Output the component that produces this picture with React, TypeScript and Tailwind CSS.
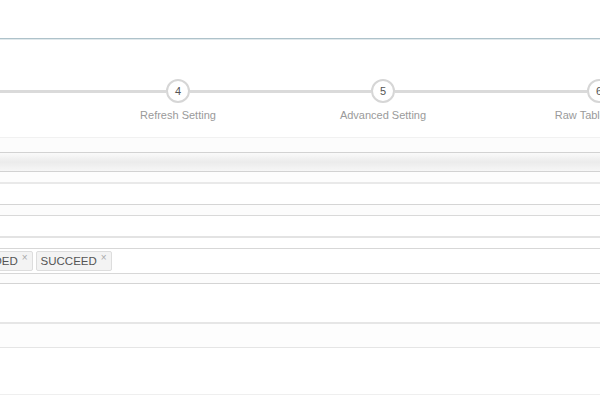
const steps = [
  { n: 3, label: 'Measures', w: 'w-[205px] -ml-[130px]' },
  { n: 4, label: 'Refresh Setting', w: 'w-[206px]' },
  { n: 5, label: 'Advanced Setting', w: 'w-[204px]' },
  { n: 6, label: 'Raw Table Setting', w: 'w-[228px]' },
];

const Step = ({ n, label, w }: { n: number; label: string; w: string }) => (
  <div className={`${w} shrink-0 flex flex-col items-center`}>
    <div className="flex items-center w-full">
      <div className="flex-1 h-[3px] bg-[#dadada]" />
      <div className="w-[24px] h-[24px] rounded-full border-2 border-[#d6d6d6] bg-white flex items-center justify-center text-[11px] text-[#555]">
        {n}
      </div>
      <div className="flex-1 h-[3px] bg-[#dadada]" />
    </div>
    <span className="mt-[6px] text-[11px] leading-[13px] text-[#9a9a9a] whitespace-nowrap">{label}</span>
  </div>
);

const Tag = ({ text, className = '' }: { text: string; className?: string }) => (
  <span
    className={`shrink-0 flex items-start h-[20px] pl-[4px] pr-[4px] bg-[#f3f3f3] border border-[#dddddd] rounded-[2px] text-[11.5px] text-[#555] ${className}`}
  >
    <span className="leading-[18px]">{text}</span>
    <span className="ml-[4px] text-[10px] leading-[10px] text-[#aaa] mt-[1px]">×</span>
  </span>
);

export default function App() {
  return (
    <div className="w-[600px] h-[400px] overflow-hidden bg-white font-['Liberation_Sans',Arial,sans-serif]">
      <div className="h-[39px] border-b border-[#aec2ca]" />
      <div className="h-px bg-[#e1e9ec]" />

      <div className="h-[97px] pt-[39px] flex">
        {steps.map((s) => (
          <Step key={s.n} {...s} />
        ))}
      </div>

      <div className="h-[15px] border-t border-[#f1f1f1] bg-[#fcfcfc]" />
      <div className="h-[20px] border-y border-[#d2d2d2] bg-linear-to-b from-[#fafafa] via-[#ebebeb] to-[#f6f6f6]" />

      <div className="h-[10px] bg-[#fdfdfd]" />
      <div className="h-[23px] border-t-2 border-t-[#e9e9e9] border-b border-b-[#d5d5d5]" />

      <div className="h-[10px] bg-[#fcfcfc]" />
      <div className="h-[23px] border-t border-t-[#d9d9d9] border-b-2 border-b-[#e3e3e3]" />

      <div className="h-[10px]" />
      <div className="h-[26px] border-y border-[#d7d7d7] flex items-center gap-[3px]">
        <Tag text="DISCARDED" className="-ml-[55px]" />
        <Tag text="SUCCEED" />
      </div>

      <div className="h-[9px] bg-[#fcfcfc]" />
      <div className="h-[41px] border-t border-t-[#d4d4d4] border-b-2 border-b-[#e6e6e6]" />

      <div className="h-[23px] bg-[#fdfdfd]" />
      <div className="h-[48px] border-t border-t-[#e5e5e5] border-b border-b-[#efefef]" />
    </div>
  );
}
